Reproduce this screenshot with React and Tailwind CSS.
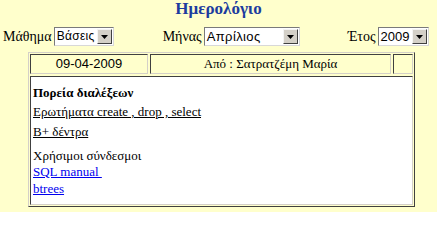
import React from "react";

const serif = { fontFamily: '"Liberation Serif", "Times New Roman", serif' };
const sans = { fontFamily: '"Liberation Sans", Arial, sans-serif' };

function Select({ value, width, track }) {
  return (
    <div
      className={`flex items-center h-[19px] bg-white border border-t-[#7a7a7a] border-l-[#7a7a7a] border-b-[#d8d8d8] border-r-[#d8d8d8] ${width}`}
    >
      <div className={`flex-1 pl-[2px] leading-[15px] text-black whitespace-nowrap ${track}`} style={sans}>
        {value}
      </div>
      <div className="w-[15px] h-[15px] mr-[1px] shrink-0 flex items-center justify-center bg-[#d4d0c8] border border-t-[#f4f4f4] border-l-[#f4f4f4] border-b-[#404040] border-r-[#404040]">
        <svg width="7" height="4" viewBox="0 0 7 4">
          <path d="M0 0h7L3.5 4z" fill="#000" />
        </svg>
      </div>
    </div>
  );
}

export default function App() {
  return (
    <div className="w-[437px] h-[212px] bg-[#ffffcc] overflow-hidden text-black" style={serif}>
      <div className="h-[18px] text-center text-[17px] leading-[17px] font-bold text-[#1c3c9e]">
        Ημερολόγιο
      </div>
      <div className="flex items-center h-[19px] mt-[9px] text-[14px]">
        <span className="ml-[3px] mr-[2px]">Μάθημα</span>
        <Select value="Βάσεις" width="w-[60px]" track="text-[12px] tracking-[0.3px]" />
        <span className="ml-[49px] mr-[2px]">Μήνας</span>
        <Select value="Απρίλιος" width="w-[96px]" track="text-[13px] tracking-[0.4px]" />
        <span className="ml-[48px] mr-[2px]">Έτος</span>
        <Select value="2009" width="w-[51px]" track="text-[13px] tracking-[0px]" />
      </div>
      <div className="ml-[28px] mt-[6px] w-[387px] h-[155px] border border-t-[#d4d0c8] border-l-[#d4d0c8] border-b-[#404040] border-r-[#404040] p-[1px] flex flex-col gap-[2px]">
        <div className="flex gap-[2px] h-[20px]">
          <div className="w-[118px] flex items-center justify-center border border-t-[#404040] border-l-[#404040] border-b-[#d4d0c8] border-r-[#d4d0c8] text-[13px]" style={sans}>
            09-04-2009
          </div>
          <div className="flex-1 flex items-center justify-center border border-t-[#404040] border-l-[#404040] border-b-[#d4d0c8] border-r-[#d4d0c8] text-[13px]">
            Από : Σατρατζέμη Μαρία
          </div>
          <div className="w-[20px] border border-t-[#404040] border-l-[#404040] border-b-[#d4d0c8] border-r-[#d4d0c8]" />
        </div>
        <div className="flex-1 bg-white border border-t-[#404040] border-l-[#404040] border-b-[#d4d0c8] border-r-[#d4d0c8] pl-[2px] pt-[7px] text-[13px] leading-[17px]">
          <div className="h-[19px] font-bold">Πορεία διαλέξεων</div>
          <div className="h-[20px] underline">Ερωτήματα create , drop , select</div>
          <div className="h-[24px] underline">B+ δέντρα</div>
          <div className="h-[16px]">Χρήσιμοι σύνδεσμοι</div>
          <div className="h-[17px] underline text-[#0000ee]">SQL manual&nbsp;</div>
          <div className="h-[17px] underline text-[#0000ee]">btrees</div>
        </div>
      </div>
    </div>
  );
}
